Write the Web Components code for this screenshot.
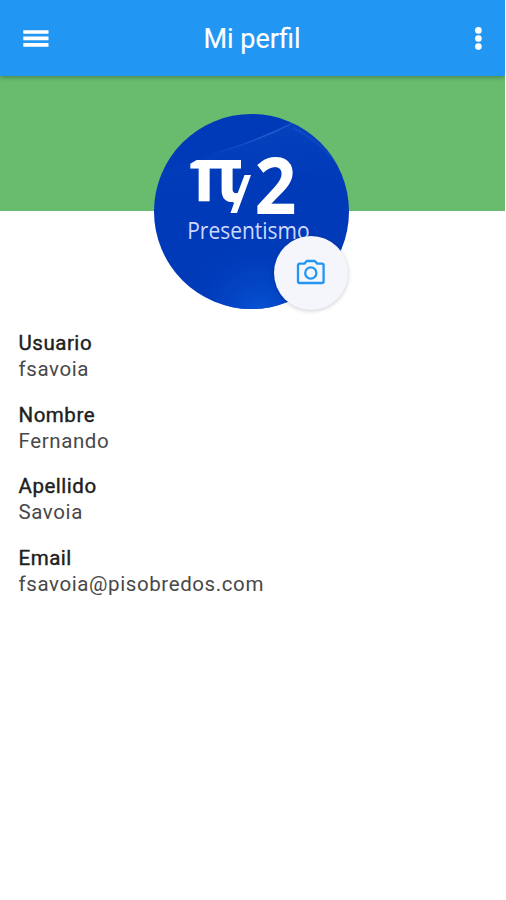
<!DOCTYPE html>
<html lang="es">
<head>
<meta charset="utf-8">
<title>Mi perfil</title>
<style>
html,body{margin:0;background:#fff;font-family:Roboto,sans-serif}
</style>
</head>
<body>
<profile-page>
  <app-bar>Mi perfil</app-bar>
  <profile-header></profile-header>
  <profile-field label="Usuario">fsavoia</profile-field>
  <profile-field label="Nombre">Fernando</profile-field>
  <profile-field label="Apellido">Savoia</profile-field>
  <profile-field label="Email">fsavoia@pisobredos.com</profile-field>
</profile-page>
<script>
function define(name, html) {
  const template = document.createElement('template');
  template.innerHTML = html;
  customElements.define(name, class extends HTMLElement {
    constructor() {
      super();
      this.attachShadow({mode: 'open'}).append(template.content.cloneNode(true));
    }
    connectedCallback() {
      const label = this.shadowRoot.querySelector('.label');
      if (label) label.textContent = this.getAttribute('label');
    }
  });
}

define('profile-page', `
<style>:host{display:flex;flex-direction:column;width:505px;height:900px;overflow:hidden;background:#fff}</style>
<slot></slot>`);

define('app-bar', `
<style>
:host{display:grid;grid-template-columns:36px 1fr 36px;box-sizing:border-box;flex:none;height:76px;padding:0 19px 0 18px;align-items:center;background:#2196f3;color:#fff;position:relative;z-index:1;box-shadow:0 1px 5px rgba(0,0,0,.35)}
h1{margin:0;padding-top:2px;text-align:center;font-size:27px;line-height:36px;font-weight:400;-webkit-text-stroke:.15px #fff}
svg{display:block;width:36px;height:36px;fill:#fff}
.more{width:18px;justify-self:end}
</style>
<svg viewBox="0 0 36 36"><path d="M5.3 10.2h25.2v3.6H5.3zM5.3 16.6h25.2v3.6H5.3zM5.3 23.1h25.2v3.6H5.3z"/></svg>
<h1><slot></slot></h1>
<svg class="more" viewBox="0 0 18 36"><circle cx="10.4" cy="10.4" r="3.3"/><circle cx="10.4" cy="18.5" r="3.3"/><circle cx="10.4" cy="26.6" r="3.3"/></svg>`);

define('profile-header', `
<style>
:host{display:flex;box-sizing:border-box;flex:none;height:253.8px;padding-top:38px;justify-content:center;background:linear-gradient(#69bc6d 135px,#fff 135px)}
</style>
<profile-avatar></profile-avatar>`);

define('profile-avatar', `
<style>
:host{display:block;position:relative;width:195px;height:195px;margin-right:2px}
svg{display:block}
camera-button{position:absolute;left:120px;top:122px}
</style>
<svg width="195" height="195" viewBox="0 0 195 195">
  <defs>
    <radialGradient id="glow" cx=".54" cy="1.02" r=".42"><stop stop-color="#0754d5"/><stop offset="1" stop-color="#003ab8" stop-opacity="0"/></radialGradient>
    <linearGradient id="sheen" x1="0" y1="0" x2="1" y2="0"><stop stop-color="#3974df" stop-opacity="0"/><stop offset=".75" stop-color="#3974df" stop-opacity=".55"/><stop offset="1" stop-color="#3974df" stop-opacity=".25"/></linearGradient>
    <linearGradient id="haze" x1=".4" y1="0" x2=".6" y2="1"><stop stop-color="#1455cb" stop-opacity=".35"/><stop offset="1" stop-color="#003ab8" stop-opacity="0"/></linearGradient>
    <clipPath id="disc"><circle cx="97.5" cy="97.5" r="97.5"/></clipPath>
  </defs>
  <g clip-path="url(#disc)">
    <rect width="195" height="195" fill="#003ab8"/>
    <path d="M0 60Q85 34 140 8Q170 23 195 58L195 80Q130 25 0 90Z" fill="url(#haze)"/>
    <path d="M50 42Q95 31 141 8" fill="none" stroke="url(#sheen)" stroke-width="1.4"/>
    <path d="M139 14Q165 26 190 57" fill="none" stroke="#2e69d5" stroke-opacity=".2" stroke-width="2.5"/>
    <rect width="195" height="195" fill="url(#glow)"/>
  </g>
  <g fill="#fff">
    <text x="35.5" y="87" font-family="Open Sans,sans-serif" font-weight="700" font-size="75" textLength="54" lengthAdjust="spacingAndGlyphs">π</text>
    <path d="M90.5 61H97L83 99H76.5L80 89L75 85L83 81Z"/>
    <text x="100.5" y="100" font-family="Open Sans,sans-serif" font-weight="700" font-size="79" textLength="42" lengthAdjust="spacingAndGlyphs">2</text>
    <text x="33.2" y="125" font-family="Open Sans,sans-serif" font-weight="400" font-size="23.5" textLength="122.5" lengthAdjust="spacingAndGlyphs" fill="#ced9ff">Presentismo</text>
  </g>
</svg>
<camera-button></camera-button>`);

define('camera-button', `
<style>
:host{display:flex;width:74px;height:74px;border-radius:50%;align-items:center;justify-content:center;background:#f4f6fb;box-shadow:0 1px 4px rgba(0,0,0,.2)}
svg{display:block;margin:-3px 1px 0 0}
</style>
<svg width="32" height="32" viewBox="0 0 32 32" fill="none" stroke="#2196f3" stroke-width="2.3" stroke-linejoin="round"><path d="M4.6 7.6H9.4L11.8 5H19.8L22.2 7.6H27A1.6 1.6 0 0 1 28.6 9.2V25.4A1.6 1.6 0 0 1 27 27H4.6A1.6 1.6 0 0 1 3 25.4V9.2A1.6 1.6 0 0 1 4.6 7.6Z"/><circle cx="15.8" cy="17" r="5.6"/></svg>`);

define('profile-field', `
<style>
:host{display:flex;flex:none;flex-direction:column;height:71.8px;padding-left:18.5px;font-size:20.5px;line-height:26px}
.label{color:#202020;-webkit-text-stroke:.4px #202020;letter-spacing:.52px}
.value{color:#484848;letter-spacing:.6px}
</style>
<div class="label"></div><div class="value"><slot></slot></div>`);
</script>
</body>
</html>
